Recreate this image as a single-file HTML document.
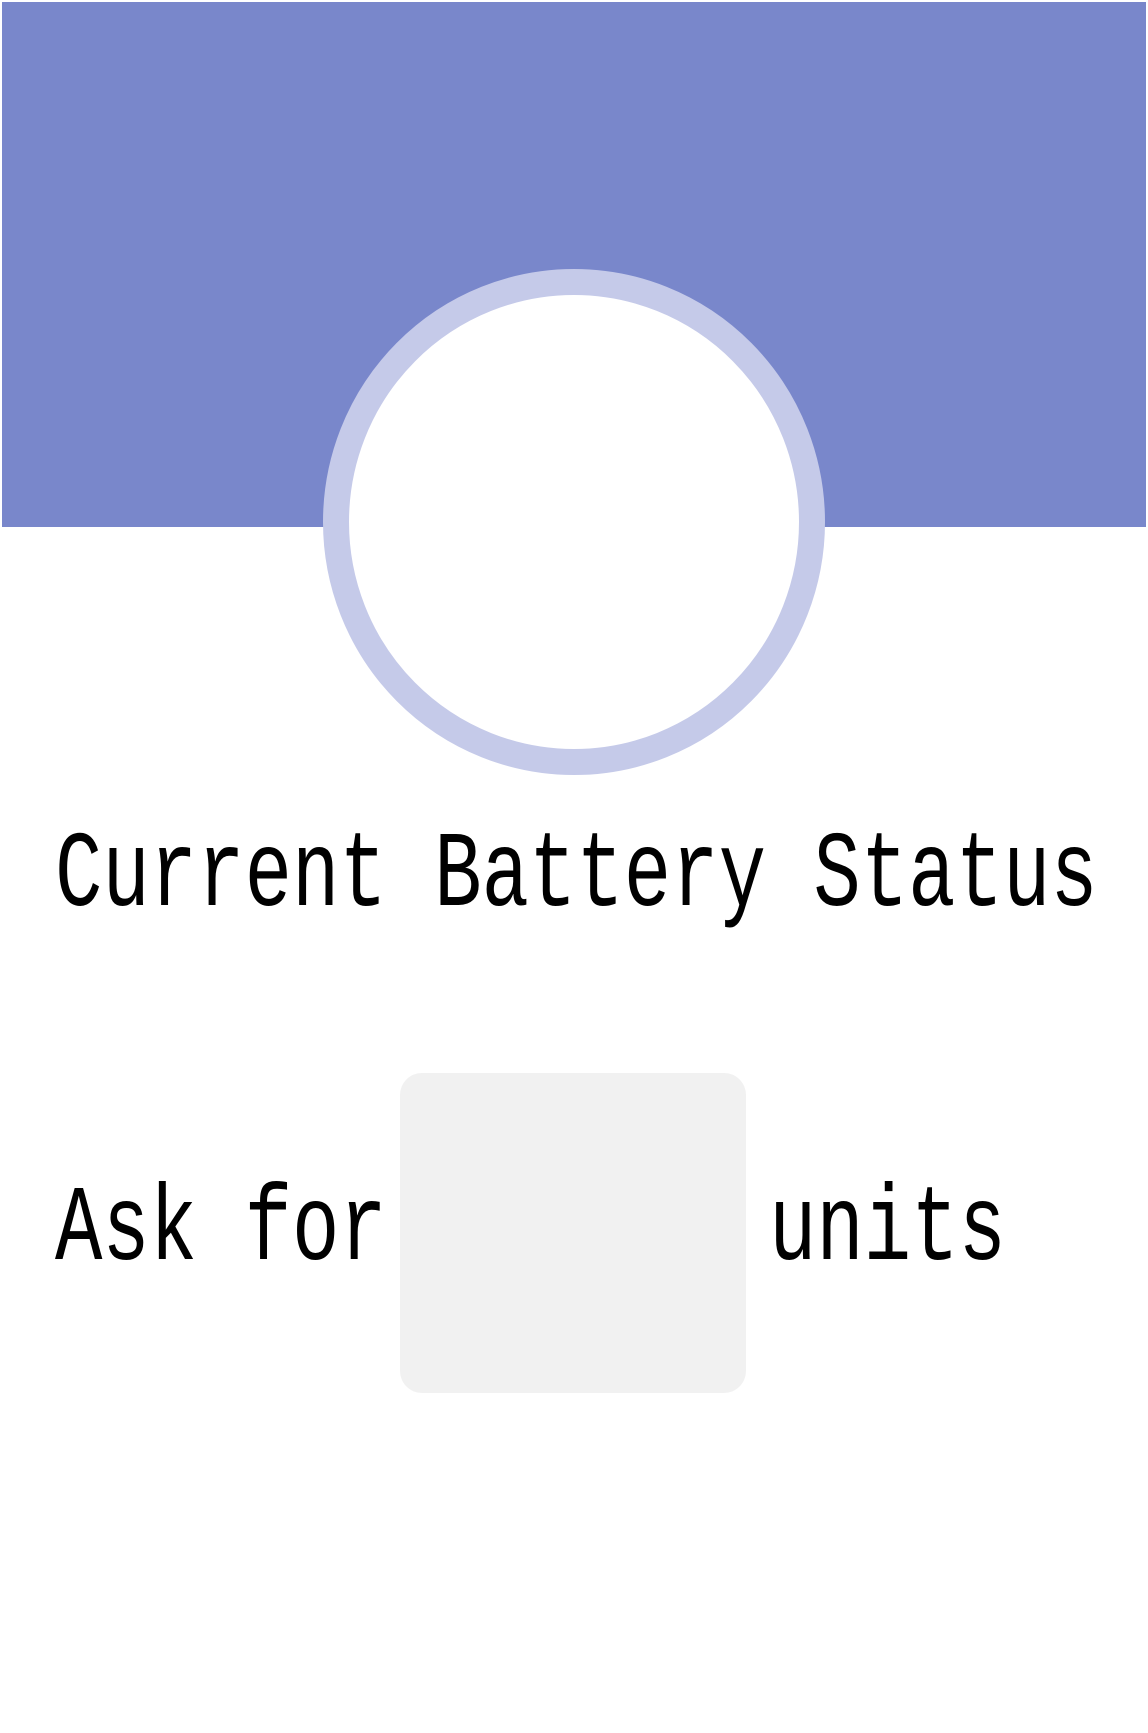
<!DOCTYPE html>
<html><head><meta charset="utf-8"><style>
html,body{margin:0;padding:0;background:#fff;width:1148px;height:1733px;overflow:hidden}
</style></head><body>
<svg width="1148" height="1733" xmlns="http://www.w3.org/2000/svg">
<rect x="0" y="0" width="1148" height="1733" fill="#fff"/>
<rect x="2" y="2" width="1144" height="525" fill="#7987cb"/>
<ellipse cx="574" cy="522" rx="238" ry="240" fill="#fff" stroke="#c5cae9" stroke-width="26"/>
<g font-family="Liberation Mono, monospace" font-size="79" fill="#000">
<text transform="translate(55,905) scale(1,1.36)">Current Battery Status</text>
<text transform="translate(55,1259) scale(1,1.36)">Ask for</text>
<text transform="translate(769,1259) scale(1,1.36)">units</text>
</g>
<rect x="400" y="1073" width="346" height="320" rx="22" fill="#f1f1f1"/>
</svg>
</body></html>
